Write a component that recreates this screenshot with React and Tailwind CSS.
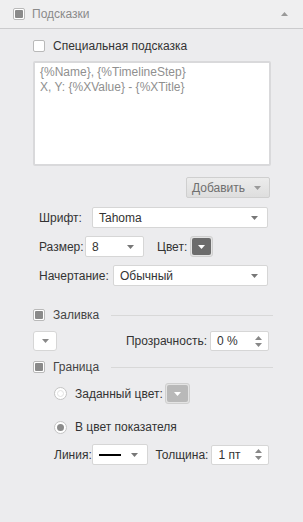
import React from "react";

const Caret = ({ className = "fill-[#777]" }) => (
  <svg width="7" height="4" viewBox="0 0 7 4" className={className}>
    <path d="M0 0h7L3.5 4z" />
  </svg>
);

const Spin = () => (
  <div className="flex flex-col items-center gap-[3px]">
    <svg width="7" height="4" viewBox="0 0 7 4" className="fill-[#888]">
      <path d="M0 4h7L3.5 0z" />
    </svg>
    <svg width="7" height="4" viewBox="0 0 7 4" className="fill-[#888]">
      <path d="M0 0h7L3.5 4z" />
    </svg>
  </div>
);

const Box = ({ checked }) => (
  <div className="w-[12px] h-[12px] rounded-[2px] border border-[#b9b9b9] bg-white flex items-center justify-center">
    {checked && <div className="w-[8px] h-[8px] rounded-[1px] bg-[#8a8a8a]" />}
  </div>
);

const Radio = ({ on }) => (
  <div className="w-[13px] h-[13px] rounded-full border border-[#c4c4c4] bg-white flex items-center justify-center">
    <div className={on ? "w-[7px] h-[7px] rounded-full bg-[#8c8c8c]" : "w-[7px] h-[7px] rounded-full border border-[#e2e2e2]"} />
  </div>
);

const Select = ({ value, className }) => (
  <div className={"h-[21px] bg-white border border-[#d6d6d6] rounded-[2px] flex items-center justify-between pl-[6px] pr-[9px] text-[#333] " + className}>
    <span>{value}</span>
    <Caret />
  </div>
);

const Spinner = ({ value }) => (
  <div className="w-[59px] h-[20px] bg-white border border-[#d6d6d6] rounded-[2px] flex items-center justify-between pl-[6px] pr-[6px] text-[#333]">
    <span>{value}</span>
    <Spin />
  </div>
);

const Section = ({ label }) => (
  <div className="flex items-center gap-[8px] h-[16px]">
    <Box checked />
    <span className="text-[#444]">{label}</span>
    <div className="flex-1 h-px bg-[#d8d8d8] ml-[4px] mr-[-2px]" />
  </div>
);

export default function App() {
  return (
    <div
      className="w-[303px] h-[522px] bg-[#ececee] text-[12px] leading-none"
      style={{ fontFamily: "'Liberation Sans', Arial, sans-serif" }}
    >
      <div className="h-[29px] bg-[#efeff0] border-b border-[#cbcbcd] flex items-center pl-[13px] pr-[15px]">
        <Box checked />
        <span className="ml-[7px] text-[#8a8a8a]">Подсказки</span>
        <div className="ml-auto">
          <svg width="7" height="4" viewBox="0 0 7 4" className="fill-[#999]">
            <path d="M0 4h7L3.5 0z" />
          </svg>
        </div>
      </div>

      <div className="pl-[33px] pr-[32px] pt-[11px] flex flex-col">
        <div className="flex items-center gap-[8px] h-[12px]">
          <Box />
          <span className="text-[#333]">Специальная подсказка</span>
        </div>

        <div className="mt-[9px] h-[105px] bg-white border-2 border-[#d9d9db] rounded-[2px] px-[5px] pt-[2px] text-[#8f8f8f] leading-[15px]">
          <div>{"{%Name}, {%TimelineStep}"}</div>
          <div>{"X, Y: {%XValue} - {%XTitle}"}</div>
        </div>

        <div className="mt-[11px] flex justify-end pr-[1px]">
          <div className="w-[84px] h-[21px] rounded-[2px] border border-[#cfcfcf] bg-gradient-to-b from-[#ececec] to-[#dedede] flex items-center justify-end pr-[8px] gap-[9px] text-[#6f6f6f]">
            <span>Добавить</span>
            <Caret className="fill-[#9a9a9a]" />
          </div>
        </div>

        <div className="pl-[6px] pr-[3px] mt-[9px] flex flex-col gap-[8px] text-[#333]">
          <div className="flex items-center">
            <span className="w-[53px]">Шрифт:</span>
            <Select value="Tahoma" className="flex-1" />
          </div>
          <div className="flex items-center">
            <span className="w-[46px]">Размер:</span>
            <Select value="8" className="w-[59px]" />
            <span className="ml-[13px] w-[33px]">Цвет:</span>
            <div className="w-[23px] h-[21px] rounded-[3px] border border-[#cfcfcf] p-[1px] bg-[#e4e4e4]">
              <div className="w-full h-full rounded-[2px] bg-[#6c6c6c] flex items-center justify-center">
                <Caret className="fill-white" />
              </div>
            </div>
          </div>
          <div className="flex items-center">
            <span className="w-[74px]">Начертание:</span>
            <Select value="Обычный" className="flex-1" />
          </div>
        </div>

        <div className="mt-[21px]">
          <Section label="Заливка" />
        </div>

        <div className="mt-[8px] pr-[2px] flex items-center">
          <div className="w-[24px] h-[20px] bg-white border border-[#d6d6d6] rounded-[3px] flex items-center justify-center">
            <Caret className="fill-[#888]" />
          </div>
          <span className="ml-auto mr-[3px] text-[#333]">Прозрачность:</span>
          <Spinner value="0 %" />
        </div>

        <div className="mt-[8px]">
          <Section label="Граница" />
        </div>

        <div className="pl-[21px] pr-[2px] mt-[8px] flex flex-col text-[#333]">
          <div className="flex items-center h-[21px]">
            <Radio />
            <span className="ml-[8px]">Заданный цвет:</span>
            <div className="ml-[2px] w-[25px] h-[21px] rounded-[3px] border border-[#cfcfcf] p-[1px] bg-[#e4e4e4]">
              <div className="w-full h-full rounded-[2px] bg-[#b9b9b9] flex items-center justify-center">
                <Caret className="fill-white" />
              </div>
            </div>
          </div>
          <div className="flex items-center h-[14px] mt-[16px]">
            <Radio on />
            <span className="ml-[8px]">В цвет показателя</span>
          </div>
          <div className="flex items-center mt-[10px]">
            <span className="w-[39px]">Линия:</span>
            <div className="w-[58px] h-[21px] bg-white border border-[#d6d6d6] rounded-[2px] flex items-center justify-between pl-[6px] pr-[9px]">
              <div className="w-[22px] h-[2px] bg-black" />
              <Caret />
            </div>
            <span className="ml-[7px] mr-[3px] flex-1">Толщина:</span>
            <Spinner value="1 пт" />
          </div>
        </div>
      </div>
    </div>
  );
}
